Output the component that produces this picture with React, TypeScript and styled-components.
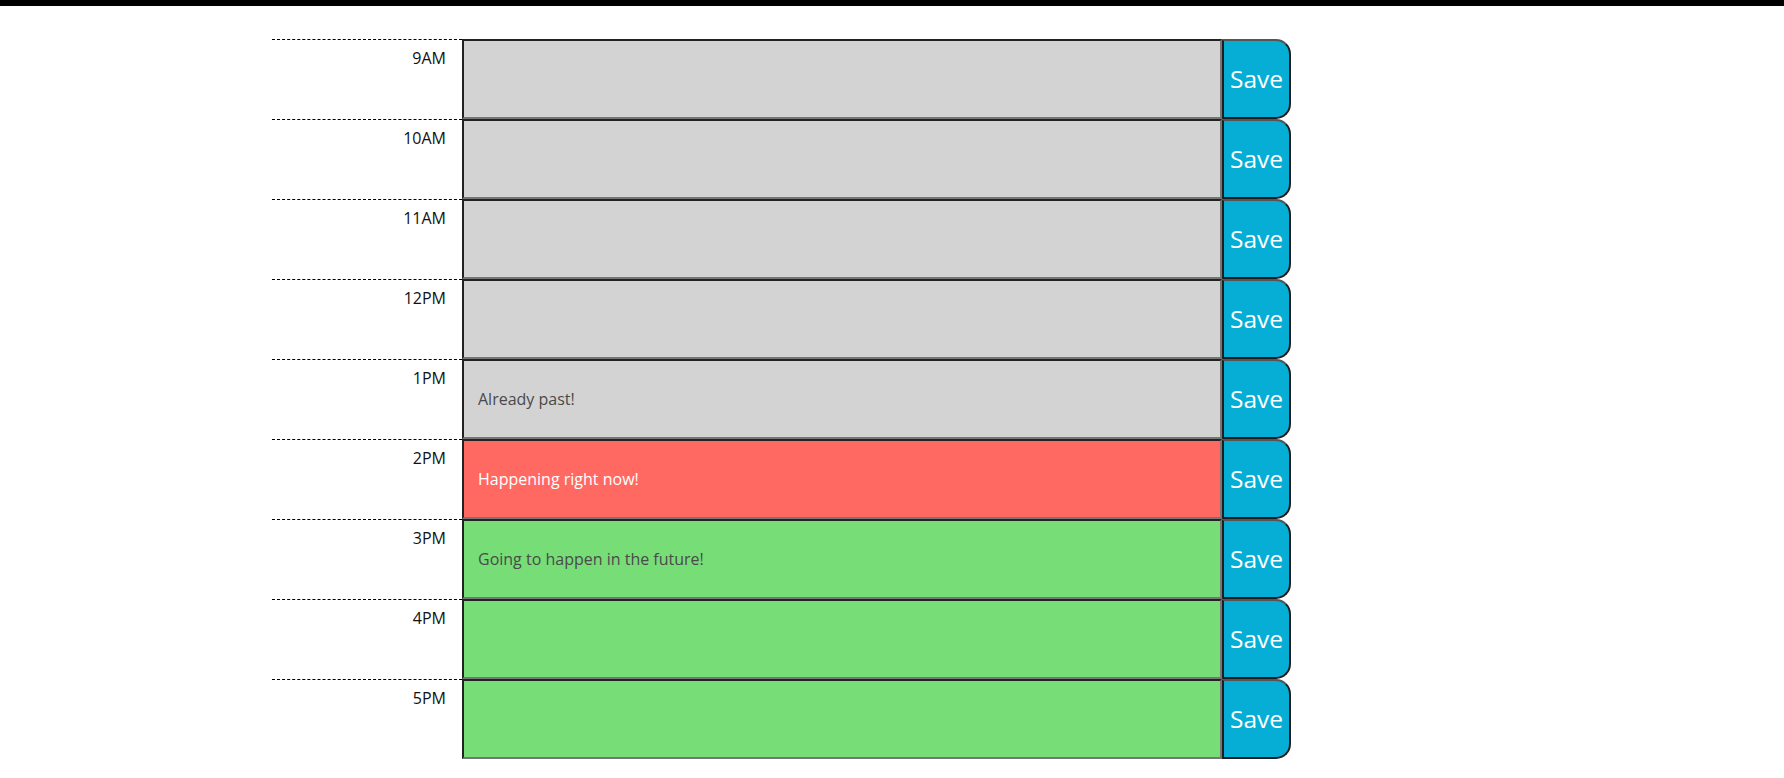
import React from "react";
import styled, { createGlobalStyle } from "styled-components";

const GlobalStyle = createGlobalStyle`
  html, body {
    margin: 0;
    padding: 0;
    background: #ffffff;
  }
  body {
    font-family: "Open Sans", "Liberation Sans", sans-serif;
    font-size: 16px;
  }
`;

const TopBar = styled.header`
  height: 6px;
  background: #000000;
`;

const Schedule = styled.main`
  display: flex;
  flex-direction: column;
  padding: 33px 0 0 272px;
`;

const Row = styled.section`
  display: flex;
  height: 80px;
`;

const Hour = styled.div`
  width: 190px;
  box-sizing: border-box;
  border-top: 1px dashed #000000;
  padding: 7px 16px 0 0;
  text-align: right;
  color: #111111;
  font-size: 16px;
  line-height: 22px;
`;

type Status = "past" | "present" | "future";

const bg: Record<Status, string> = {
  past: "#d3d3d3",
  present: "#ff6961",
  future: "#77dd77",
};

const fg: Record<Status, string> = {
  past: "#4a4a4a",
  present: "#ffffff",
  future: "#4a4a4a",
};

const Description = styled.textarea<{ $status: Status }>`
  width: 760px;
  height: 80px;
  box-sizing: border-box;
  margin: 0;
  resize: none;
  outline: none;
  border-width: 2px;
  border-style: solid;
  border-color: #222222 #767676 #767676 #222222;
  background: ${(p) => bg[p.$status]};
  color: ${(p) => fg[p.$status]};
  font-family: "Open Sans", "Liberation Sans", sans-serif;
  font-size: 16px;
  line-height: 22px;
  padding: 27px 14px 0 14px;
  overflow: hidden;
`;

const SaveButton = styled.button`
  width: 69px;
  height: 80px;
  box-sizing: border-box;
  margin: 0;
  padding: 1px 0 0 0;
  border-width: 2px;
  border-style: solid;
  border-color: #555555 #1e1e1e #1e1e1e #1e1e1e;
  border-top-right-radius: 15px;
  border-bottom-right-radius: 15px;
  background: #06aed5;
  color: #ffffff;
  font-family: "Open Sans", "Liberation Sans", sans-serif;
  font-size: 24.5px;
  line-height: 1;
  cursor: pointer;
`;

const hours: { label: string; status: Status; text: string }[] = [
  { label: "9AM", status: "past", text: "" },
  { label: "10AM", status: "past", text: "" },
  { label: "11AM", status: "past", text: "" },
  { label: "12PM", status: "past", text: "" },
  { label: "1PM", status: "past", text: "Already past!" },
  { label: "2PM", status: "present", text: "Happening right now!" },
  { label: "3PM", status: "future", text: "Going to happen in the future!" },
  { label: "4PM", status: "future", text: "" },
  { label: "5PM", status: "future", text: "" },
];

export default function App() {
  return (
    <>
      <GlobalStyle />
      <TopBar />
      <Schedule>
        {hours.map((h) => (
          <Row key={h.label}>
            <Hour>{h.label}</Hour>
            <Description $status={h.status} defaultValue={h.text} />
            <SaveButton>Save</SaveButton>
          </Row>
        ))}
      </Schedule>
    </>
  );
}
